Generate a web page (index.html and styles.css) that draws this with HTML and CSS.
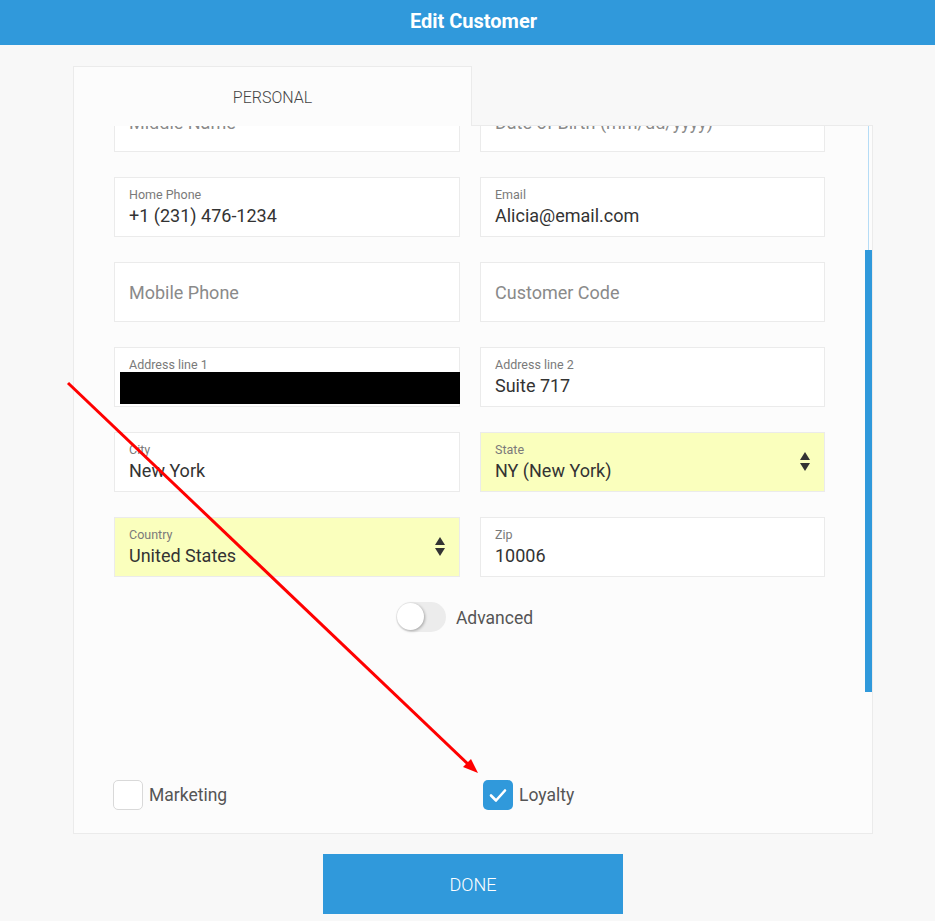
FILE: index.html
```html
<!DOCTYPE html>
<html>
<head>
<meta charset="utf-8">
<link rel="stylesheet" href="styles.css">
</head>
<body>
<header class="topbar">Edit Customer</header>
<main class="wrap">
  <div class="tabs"><div class="tab">PERSONAL</div></div>
  <div class="card">
    <div class="scroller">
      <div class="content">
        <div class="grid">
          <div class="field empty"><span class="ph">Middle Name</span></div>
          <div class="field empty"><span class="ph">Date of Birth (mm/dd/yyyy)</span></div>
          <div class="field"><span class="lbl">Home Phone</span><span class="val">+1 (231) 476-1234</span></div>
          <div class="field"><span class="lbl">Email</span><span class="val">Alicia@email.com</span></div>
          <div class="field empty"><span class="ph">Mobile Phone</span></div>
          <div class="field empty"><span class="ph">Customer Code</span></div>
          <div class="field"><span class="lbl">Address line 1</span><span class="redact"></span></div>
          <div class="field"><span class="lbl">Address line 2</span><span class="val">Suite 717</span></div>
          <div class="field"><span class="lbl">City</span><span class="val">New York</span></div>
          <div class="field select"><span class="lbl">State</span><span class="val">NY (New York)</span><span class="arrows"><i class="up"></i><i class="down"></i></span></div>
          <div class="field select"><span class="lbl">Country</span><span class="val">United States</span><span class="arrows"><i class="up"></i><i class="down"></i></span></div>
          <div class="field"><span class="lbl">Zip</span><span class="val">10006</span></div>
        </div>
        <div class="toggle-row">
          <span class="toggle"><span class="knob"></span></span>
          <span class="toggle-label">Advanced</span>
        </div>
      </div>
      <div class="sbar"><div class="sthumb"></div></div>
    </div>
    <div class="checks">
      <label class="check"><span class="box"></span><span class="clabel">Marketing</span></label>
      <label class="check"><span class="box on"><svg viewBox="0 0 30 30" width="30" height="30"><path d="M8 15.5 L13 20.5 L22 10.5" fill="none" stroke="#fff" stroke-width="2.6" stroke-linecap="round" stroke-linejoin="round"/></svg></span><span class="clabel">Loyalty</span></label>
    </div>
  </div>
  <div class="actions"><button class="done">DONE</button></div>
</main>
<svg class="annot" width="935" height="921" viewBox="0 0 935 921">
  <line x1="68" y1="383" x2="469" y2="765" stroke="#ff0000" stroke-width="3"/>
  <polygon points="478,773 463,767 471,759" fill="#ff0000"/>
</svg>
</body>
</html>
```
FILE: styles.css
```css
html, body {
  margin: 0;
  padding: 0;
}
body {
  background: #f8f8f8;
  font-family: Roboto, "Liberation Sans", Arial, sans-serif;
  width: 935px;
  height: 921px;
  overflow: hidden;
  position: relative;
}
.topbar {
  height: 45px;
  box-sizing: border-box;
  padding-bottom: 3px;
  padding-left: 12px;
  background: #3099db;
  color: #fff;
  font-weight: 700;
  font-size: 20px;
  display: flex;
  align-items: center;
  justify-content: center;
}
.wrap {
  width: 800px;
  margin-left: 73px;
  padding-top: 21px;
}
.tabs {
  display: flex;
  position: relative;
  z-index: 2;
  margin-bottom: -1px;
}
.tab {
  width: 399px;
  height: 60px;
  box-sizing: border-box;
  border: 1px solid #ebebeb;
  border-bottom: none;
  background: #fcfcfc;
  color: #444;
  font-weight: 300;
  font-size: 16px;
  display: flex;
  align-items: center;
  justify-content: center;
  padding-top: 1px;
}
.card {
  border: 1px solid #ebebeb;
  background: #fcfcfc;
  width: 800px;
  box-sizing: border-box;
}
.scroller {
  position: relative;
  height: 566px;
  overflow: hidden;
}
.content {
  margin-top: -34px;
  padding: 0 47px 0 40px;
}
.grid {
  display: grid;
  grid-template-columns: 346px 345px;
  column-gap: 20px;
  row-gap: 25px;
}
.field {
  height: 60px;
  box-sizing: border-box;
  border: 1px solid #ebebeb;
  background: #fff;
  padding: 9px 15px 0 14px;
  display: flex;
  flex-direction: column;
  position: relative;
}
.field.empty {
  justify-content: center;
  padding-top: 0;
}
.field.select {
  background: #faffbd;
}
.lbl {
  font-size: 12.5px;
  line-height: 15px;
  color: #7a7a7a;
}
.val {
  font-size: 18px;
  line-height: 24px;
  margin-top: 2px;
  color: #333;
}
.ph {
  font-size: 18px;
  color: #8a8a8a;
}
.redact {
  display: block;
  height: 32px;
  background: #000;
  margin-left: -9px;
  margin-right: -16px;
}
.arrows {
  position: absolute;
  right: 14px;
  top: 19px;
  display: flex;
  flex-direction: column;
  gap: 3px;
}
.arrows i {
  display: block;
  width: 0;
  height: 0;
  border-left: 5px solid transparent;
  border-right: 5px solid transparent;
}
.arrows .up {
  border-bottom: 8px solid #333;
}
.arrows .down {
  border-top: 8px solid #333;
}
.toggle-row {
  display: flex;
  align-items: center;
  justify-content: center;
  gap: 10px;
  margin-top: 25px;
  padding-right: 10px;
}
.toggle {
  width: 50px;
  height: 30px;
  border-radius: 15px;
  background: #ececec;
  position: relative;
  display: block;
}
.knob {
  position: absolute;
  left: 1px;
  top: 1px;
  width: 27px;
  height: 27px;
  border-radius: 50%;
  background: #fff;
  box-shadow: 1px 1px 3px rgba(0,0,0,0.3);
}
.toggle-label {
  font-size: 17.5px;
  color: #555;
  padding-top: 1px;
}
.sbar {
  position: absolute;
  right: 0;
  top: 0;
  width: 7px;
  height: 566px;
}
.sbar::before {
  content: "";
  position: absolute;
  left: 3px;
  top: 0;
  bottom: 0;
  width: 1px;
  background: #b5dcf6;
}
.sthumb {
  position: absolute;
  left: 0;
  right: 0;
  bottom: 0;
  height: 442px;
  background: #3099db;
}
.checks {
  display: flex;
  padding: 88px 0 23px 39px;
}
.check {
  display: flex;
  align-items: center;
  width: 370px;
}
.box {
  width: 30px;
  height: 30px;
  box-sizing: border-box;
  border: 1px solid #d9d9d9;
  border-radius: 5px;
  background: #fff;
  display: block;
}
.box.on {
  border: none;
  background: #3099db;
}
.box svg {
  display: block;
}
.clabel {
  font-size: 17.5px;
  color: #555;
  margin-left: 6px;
}
.actions {
  display: flex;
  justify-content: center;
  padding-top: 20px;
}
.done {
  width: 300px;
  height: 60px;
  border: none;
  background: #3099db;
  color: #fff;
  font-family: Roboto, "Liberation Sans", Arial, sans-serif;
  font-size: 18px;
  font-weight: 300;
}
.annot {
  position: absolute;
  left: 0;
  top: 0;
  pointer-events: none;
}
```
